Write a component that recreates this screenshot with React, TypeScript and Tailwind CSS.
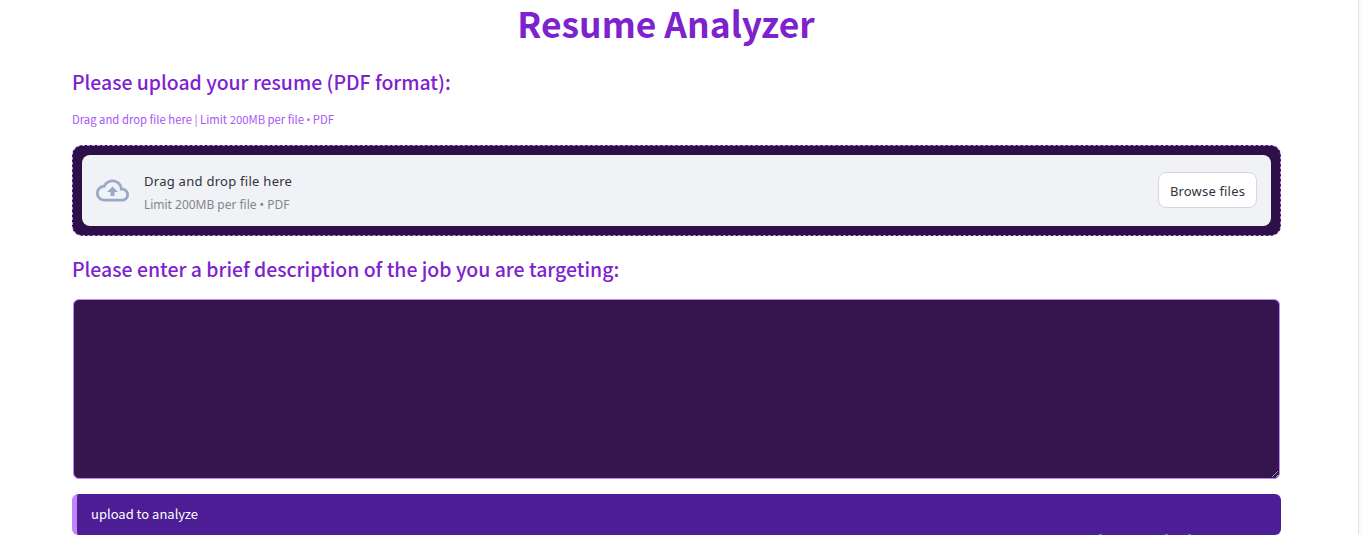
const sourceFont = "font-['Noto_Sans_CJK_SC',sans-serif]";
const uiFont = "font-['Noto_Sans',sans-serif]";

function CloudUploadIcon() {
  return (
    <svg viewBox="0 0 24 24" className="h-[33px] w-[33px] shrink-0 fill-[#9ba9c9]" aria-hidden="true">
      <path d="M19.35 10.04C18.67 6.59 15.64 4 12 4 9.11 4 6.6 5.64 5.35 8.04 2.34 8.36 0 10.91 0 14c0 3.31 2.69 6 6 6h13c2.76 0 5-2.24 5-5 0-2.64-2.05-4.78-4.65-4.96zM19 18H6c-2.21 0-4-1.79-4-4s1.79-4 4-4h.71C7.37 7.69 9.48 6 12 6c3.04 0 5.5 2.46 5.5 5.5v.5H19c1.66 0 3 1.34 3 3s-1.34 3-3 3zM8 13h2.55v3h2.9v-3H16l-4-4z" />
    </svg>
  );
}

function Uploader() {
  return (
    <section className="mt-[17px] h-[91px] rounded-[10px] border border-dashed border-[#c084fc] bg-[#2e1049] p-[9px]">
      <div className={`flex h-[71px] items-center rounded-lg bg-[#f0f2f6] pr-3.5 pl-3.5 ${uiFont}`}>
        <CloudUploadIcon />
        <div className="ml-[15px] flex flex-col pt-[5px] whitespace-nowrap">
          <span className="text-[13px] leading-[23px] tracking-[0.27px] text-[#31333f]">Drag and drop file here</span>
          <span className="text-[12px] leading-[23px] tracking-[-0.02px] text-[#83858d]">Limit 200MB per file • PDF</span>
        </div>
        <button className="mb-px ml-auto h-9 w-[99px] rounded-lg border border-[#d6d7db] bg-white pt-[3px] text-[13px] tracking-[0.17px] whitespace-nowrap text-[#31333f]">
          Browse files
        </button>
      </div>
    </section>
  );
}

export default function App() {
  return (
    <div className={`flex h-[535px] overflow-hidden bg-white ${sourceFont}`}>
      <main className="ml-[72px] w-[1209px] whitespace-nowrap">
        <h1 className="h-[50px] pr-[21px] text-center text-[35.4px] leading-[46px] font-bold text-[#7e22ce]">Resume Analyzer</h1>
        <h2 className="mt-4 h-8 text-[19.4px] leading-8 font-medium text-[#7e22ce]">
          Please upload your resume (PDF format):
        </h2>
        <p className="mt-3 h-[18px] text-[11.3px] leading-[18px] text-[#a855f7]">
          Drag and drop file here | Limit 200MB per file <span className={`text-[10px] ${uiFont}`}>•</span> PDF
        </p>
        <Uploader />
        <h2 className="mt-[17px] h-8 text-[19.43px] leading-8 font-medium text-[#7e22ce]">
          Please enter a brief description of the job you are targeting:
        </h2>
        <textarea
          aria-label="Job description"
          className="mx-px mt-3.5 block h-[180px] w-[1207px] resize rounded-md border border-[#c084fc] bg-[#36154d] outline-none"
        />
        <div className="relative mt-[15px] flex h-[41px] items-center rounded-md border-l-[5px] border-[#c084fc] bg-[#4c1d95] pb-0.5 pl-3.5 text-[13px] text-white">
          upload to analyze
          <span className="absolute bottom-0 left-[1022px] h-px w-[3px] bg-[#8c78a8]" />
          <span className="absolute bottom-0 left-[1088px] h-px w-[3px] bg-[#8c78a8]" />
          <span className="absolute bottom-0 left-[1111px] h-px w-[3px] bg-[#8c78a8]" />
        </div>
      </main>
      <div className="ml-auto w-1 border-l border-[#e2e2e2] bg-[#fafafa]" />
    </div>
  );
}
